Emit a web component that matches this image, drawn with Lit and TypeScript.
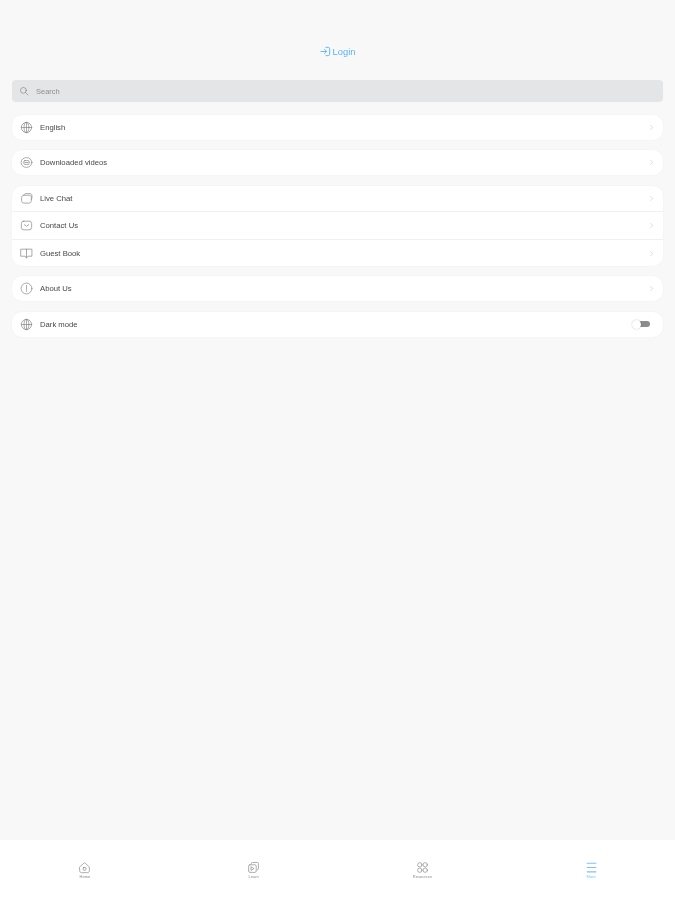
import { LitElement, html, css, svg } from "lit";
import { customElement } from "lit/decorators.js";

const icons: Record<string, unknown> = {
  globe: svg`<circle cx="12" cy="12" r="9.5"/><ellipse cx="12" cy="12" rx="4.5" ry="9.5"/><path d="M2.5 12h19M12 2.5v19"/>`,
  video: svg`<ellipse cx="12" cy="12" rx="10" ry="9"/><rect x="7" y="8.5" width="10" height="7" rx="2"/><path d="M9 12h6"/>`,
  chat: svg`<path d="M3 10c0-2.5 2-4 4.5-4H17c2.5 0 4 1.5 4 4v6c0 2.5-2 4.5-4.5 4.5H7.5C5 20.5 3 18.5 3 16z"/><path d="M7 6c.5-2 2-3 4-3h8c2 0 3 1.5 3 3v5c0 1.2-.4 2-1 2.6"/>`,
  mail: svg`<rect x="2.5" y="4" width="19" height="16" rx="4.5"/><path d="M8 10.5l4 3 4-3"/>`,
  book: svg`<path d="M2 4h20v13h-7.500L12 20.500 9.500 17H2z"/><path d="M12 4v16"/>`,
  info: svg`<circle cx="12" cy="12" r="10"/><path d="M12 6.5v7M12 16v1.5"/>`,
  chevron: svg`<path d="M9 5l7 7-7 7"/>`,
  search: svg`<circle cx="10.5" cy="10.5" r="7"/><path d="M16 16l5.5 5.5"/>`,
  login: svg`<path d="M13 3h5c2 0 3 1.2 3 3v12c0 1.8-1 3-3 3h-5" stroke-width="2"/><path d="M2 12h12M10 7.5l4.500 4.500-4.500 4.500" stroke-width="2"/>`,
  home: svg`<path d="M3 11l9-8 9 8v7c0 2-1.5 3.5-3.5 3.5h-11C4.5 21.5 3 20 3 18z"/><rect x="9.5" y="12" width="5" height="5" rx="1"/>`,
  learn: svg`<path d="M8 4.5c0-1 .8-1.800 1.800-1.800h9.500c1 0 1.800.8 1.800 1.800v10c0 1-.8 1.800-1.800 1.800"/><rect x="3" y="7" width="14" height="14" rx="2.5"/><path d="M8 11l5 3-5 3z"/>`,
  grid: svg`<circle cx="7" cy="7" r="4"/><circle cx="17" cy="7" r="4"/><circle cx="7" cy="17" r="4"/><circle cx="17" cy="17" r="4"/>`,
  menu: svg`<path d="M4 4h16M4 12h16M4 20h16" stroke-width="2"/>`,
};

type Row = { icon: string; label: string; toggle?: boolean };

const groups: Row[][] = [
  [{ icon: "globe", label: "English" }],
  [{ icon: "video", label: "Downloaded videos" }],
  [
    { icon: "chat", label: "Live Chat" },
    { icon: "mail", label: "Contact Us" },
    { icon: "book", label: "Guest Book" },
  ],
  [{ icon: "info", label: "About Us" }],
  [{ icon: "globe", label: "Dark mode", toggle: true }],
];

const tabs = [
  { icon: "home", label: "Home" },
  { icon: "learn", label: "Learn" },
  { icon: "grid", label: "Resources" },
  { icon: "menu", label: "More", active: true },
];

const icon = (name: string) =>
  html`<svg viewBox="0 0 24 24" fill="none" stroke="currentColor" stroke-width="1.3" stroke-linecap="round" stroke-linejoin="round">${icons[name]}</svg>`;

@customElement("app-root")
export class AppRoot extends LitElement {
  static styles = css`
    :host {
      display: flex;
      flex-direction: column;
      height: 900px;
      overflow: hidden;
      background: #f8f8f8;
      font-family: "Liberation Sans", Arial, sans-serif;
    }

    .main {
      flex: 1;
      padding: 0 12px;
      filter: blur(0.6px);
    }

    .login {
      box-sizing: border-box;
      padding-top: 44px;
      height: 58px;
      margin-bottom: 22px;
      display: flex;
      justify-content: center;
      align-items: center;
      gap: 2px;
      color: #58b4f5;
      font-size: 9.4px;
    }

    .login svg {
      width: 11px;
      height: 11px;
    }

    .search {
      height: 22px;
      background: #e4e5e6;
      border-radius: 4px;
      display: flex;
      align-items: center;
      gap: 7px;
      padding: 0 7px;
      margin-bottom: 12.5px;
      color: #8d8f91;
      font-size: 7.5px;
    }

    .search svg {
      width: 10px;
      height: 10px;
      color: #6f7173;
      display: block;
    }

    .group {
      background: #fff;
      border-radius: 10px;
      margin-bottom: 10.5px;
      box-shadow: 0 0 2px rgb(0 0 0 / 0.05);
    }

    .row {
      height: 25px;
      display: flex;
      align-items: center;
      padding: 0 8px;
      font-size: 7.7px;
      color: #45474a;
    }

    .group.multi .row {
      padding-top: 1.35px;
      padding-bottom: 0.35px;
      border-bottom: 1px solid #f0f0f0;
    }

    .group.multi .row:first-child {
      padding-top: 0;
    }

    .group.multi .row:last-child {
      padding-bottom: 0;
      border-bottom: none;
    }

    .lead {
      width: 13px;
      height: 13px;
      color: #85878a;
      margin-right: 7px;
    }

    .label {
      flex: 1;
    }

    .chev {
      width: 7px;
      height: 7px;
      color: #a4a5a7;
    }

    .lead svg,
    .chev svg {
      display: block;
    }

    .toggle {
      position: relative;
      width: 18px;
      height: 7px;
      margin-right: 5px;
      display: flex;
      justify-content: flex-end;
    }

    .toggle::before {
      content: "";
      width: 14px;
      height: 6px;
      margin-top: 0.5px;
      border-radius: 3px;
      background: #8b8c8e;
    }

    .knob {
      position: absolute;
      left: 0;
      top: -1px;
      width: 9px;
      height: 9px;
      border-radius: 50%;
      background: #fff;
      box-shadow: 0 0 1.5px rgb(0 0 0 / 0.3);
    }

    .nav {
      flex: none;
      height: 60px;
      background: #fff;
      display: grid;
      grid-template-columns: repeat(4, 1fr);
      filter: blur(0.6px);
    }

    .tab {
      display: flex;
      flex-direction: column;
      align-items: center;
      padding-top: 21px;
      padding-left: 1px;
      color: #8a8c8e;
      font-size: 4px;
      line-height: 4px;
    }

    .tab svg {
      width: 13px;
      height: 13px;
      margin-bottom: 1px;
    }

    .tab.active {
      color: #7cc3f5;
    }
  `;

  render() {
    return html`
      <div class="main">
        <div class="login">${icon("login")}<span>Login</span></div>
        <div class="search">${icon("search")}<span>Search</span></div>
        ${groups.map(
          (rows) => html`
            <div class="group ${rows.length > 1 ? "multi" : ""}">
              ${rows.map(
                (r) => html`
                  <div class="row">
                    <span class="lead">${icon(r.icon)}</span>
                    <span class="label">${r.label}</span>
                    ${r.toggle
                      ? html`<span class="toggle"><span class="knob"></span></span>`
                      : html`<span class="chev">${icon("chevron")}</span>`}
                  </div>
                `
              )}
            </div>
          `
        )}
      </div>
      <div class="nav">
        ${tabs.map(
          (t) => html`
            <div class="tab ${t.active ? "active" : ""}">
              ${icon(t.icon)}<span>${t.label}</span>
            </div>
          `
        )}
      </div>
    `;
  }
}
